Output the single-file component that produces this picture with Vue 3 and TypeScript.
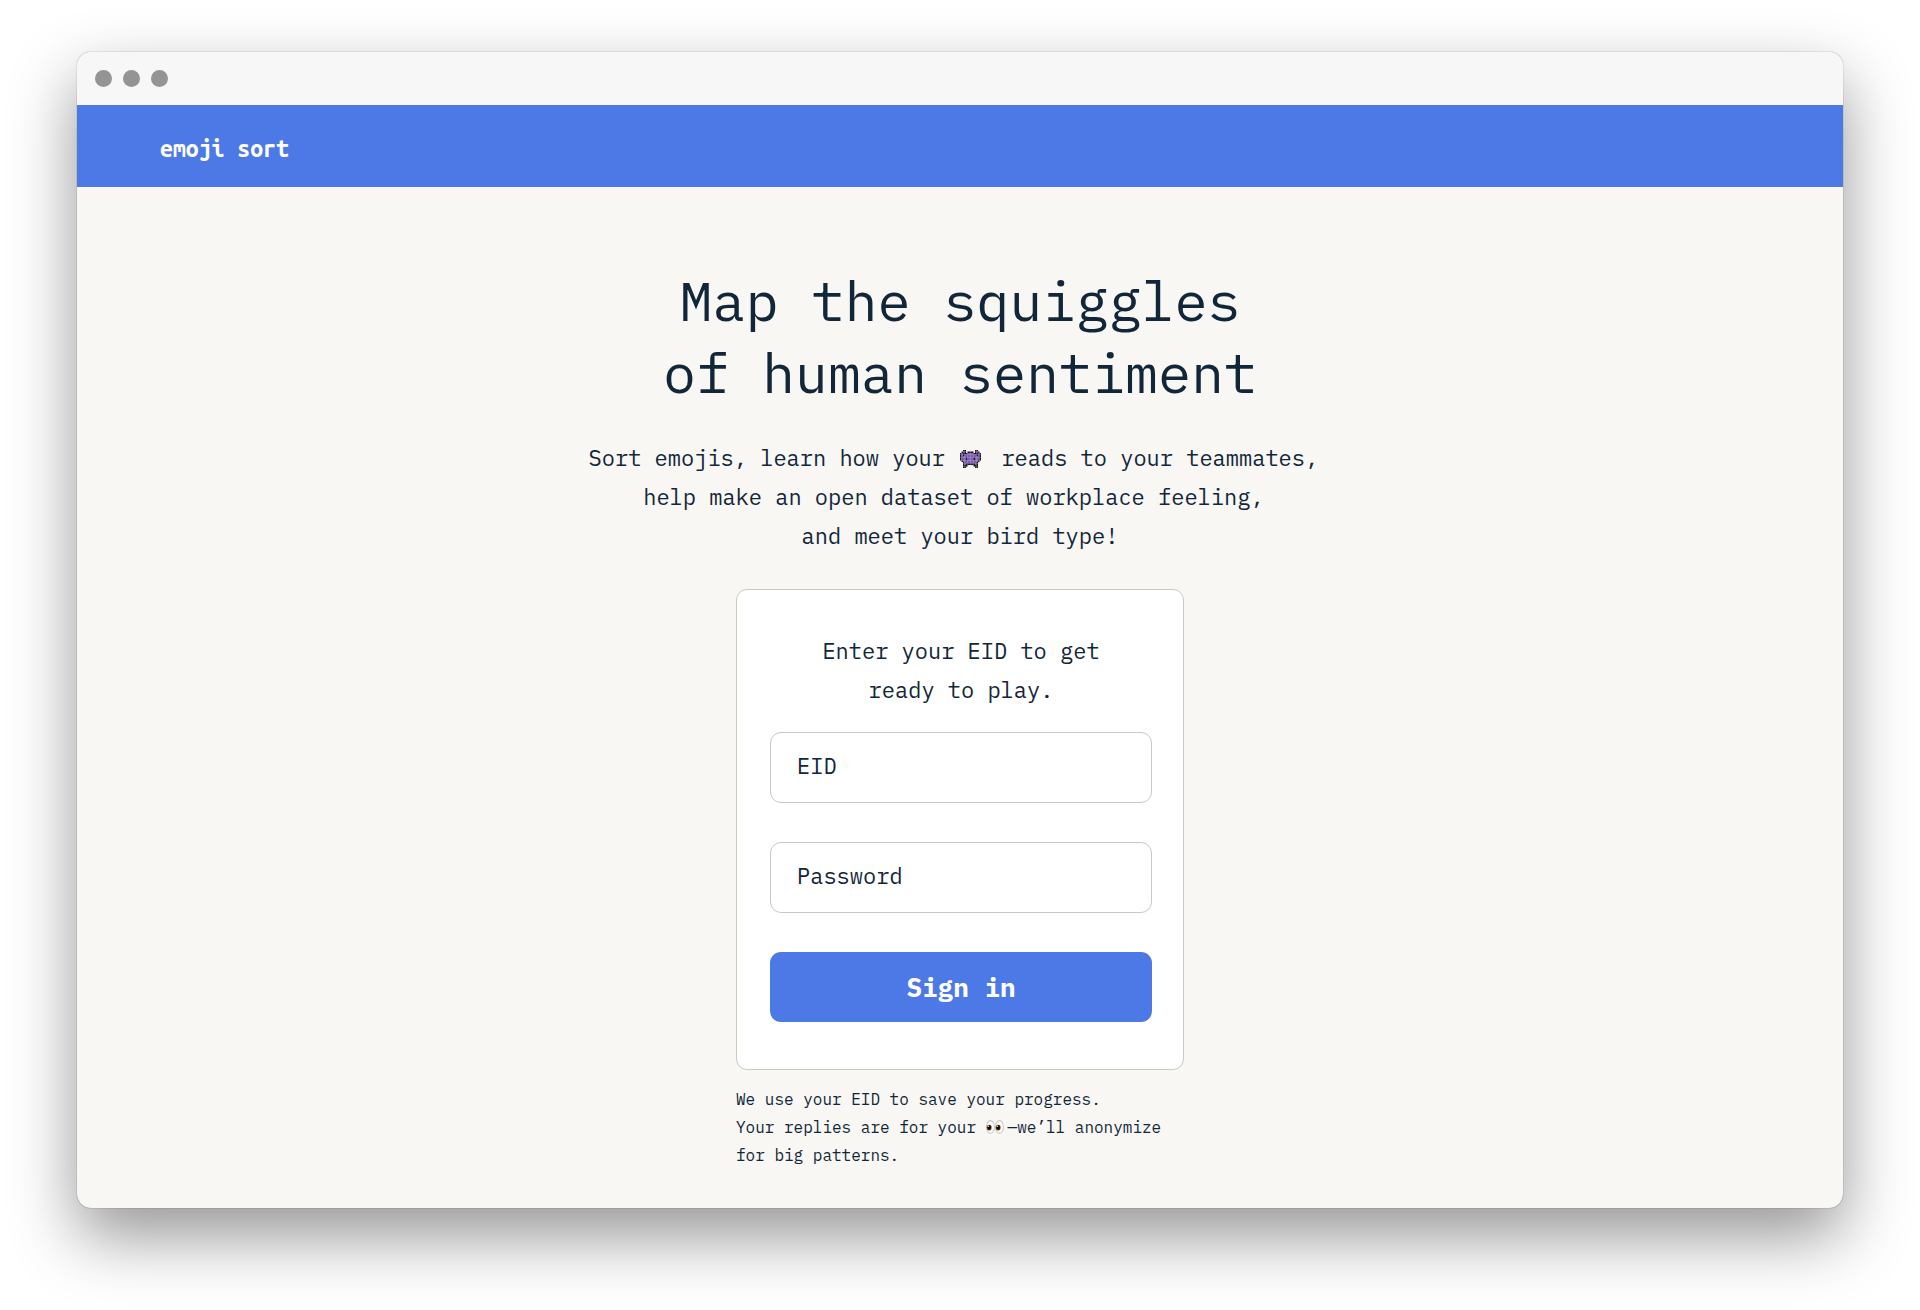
<script setup lang="ts">
import { ref } from 'vue'

const eid = ref('')
const password = ref('')

// Pixel map of the invader: k = outline, p = body, . = empty
const invader: string[] = [
  '..kk......kk..',
  '.kpk.kkkk.kpk.',
  'kpkkkppppkkkpk',
  'kpkppppppppkpk',
  'kppppppppppppk',
  'kpppkppppkpppk',
  'kpppkppppkpppk',
  '.kppppppppppk.',
  '..kppppppppk..',
  '..kpkkkkkkpk..',
  '..kkk....kkk..',
  '..kk......kk..',
]

interface Pixel { x: number; y: number; fill: string }

const pixels: Pixel[] = invader.flatMap((row, y) =>
  [...row].flatMap((c, x) =>
    c === '.' ? [] : [{ x, y, fill: c === 'k' ? '#1f1a26' : '#7d5bb5' }],
  ),
)
</script>

<template>
  <div class="desktop">
    <div class="window">
      <div class="titlebar">
        <span class="dot"></span>
        <span class="dot"></span>
        <span class="dot"></span>
      </div>

      <header class="nav">
        <a class="brand" href="#">emoji sort</a>
      </header>

      <main class="content">
        <h1 class="title">Map the squiggles<br />of human sentiment</h1>

        <p class="lead">
          Sort emojis, learn how your
          <svg class="invader" viewBox="0 0 14 12" preserveAspectRatio="none" role="img" aria-label="alien monster">
            <rect v-for="p in pixels" :key="`${p.x}-${p.y}`" :x="p.x" :y="p.y" width="1.04" height="1.04" :fill="p.fill" />
          </svg>
          reads to your teammates,&nbsp;<br />help make an open dataset of workplace feeling,&nbsp;<br />and
          meet your bird type!
        </p>

        <div class="signin">
          <form class="card" @submit.prevent>
            <p class="prompt">Enter your EID to get<br />ready to play.</p>
            <input v-model="eid" class="field" type="text" placeholder="EID" aria-label="EID" />
            <input v-model="password" class="field" type="password" placeholder="Password" aria-label="Password" />
            <button class="submit" type="submit">Sign in</button>
          </form>

          <p class="note">
            We use your EID to save your progress.<br />Your replies are for your
            <svg class="eyes" viewBox="0 0 34 26" role="img" aria-label="eyes">
              <g fill="#fdfdfd" stroke="#c9c9c9" stroke-width="2">
                <ellipse cx="8.5" cy="13" rx="7.5" ry="12" />
                <ellipse cx="25.5" cy="13" rx="7.5" ry="12" />
              </g>
              <g fill="#7a4312">
                <ellipse cx="6" cy="14" rx="4.6" ry="5.4" />
                <ellipse cx="23" cy="14" rx="4.6" ry="5.4" />
              </g>
              <g fill="#120a05">
                <ellipse cx="6" cy="14" rx="3.4" ry="4.2" />
                <ellipse cx="23" cy="14" rx="3.4" ry="4.2" />
              </g>
              <g fill="#fff">
                <circle cx="4.4" cy="11.6" r="1.4" />
                <circle cx="21.4" cy="11.6" r="1.4" />
              </g>
            </svg>—we’ll anonymize<br />for big patterns.
          </p>
        </div>
      </main>
    </div>
  </div>
</template>

<style>
body {
  background: #fff;
}
</style>

<style scoped>
.desktop {
  box-sizing: border-box;
  min-height: 100vh;
  padding: 52px 77px 102px;
  display: flex;
  overflow: hidden;
  color: #12263a;
  font-family: "IBM Plex Mono", "Liberation Mono", monospace;
}

.window {
  flex: 1;
  min-width: 0;
  display: flex;
  flex-direction: column;
  overflow: hidden;
  border-radius: 14px;
  background: #f8f7f3;
  box-shadow: 0 0 1px rgba(0, 0, 0, 0.7), 0 28px 66px rgba(0, 0, 0, 0.42);
}

.titlebar {
  display: flex;
  align-items: center;
  gap: 11px;
  height: 53px;
  padding: 0 18px;
  background: #f7f7f7;
}

.dot {
  width: 17px;
  height: 17px;
  border-radius: 50%;
  background: #949494;
}

.nav {
  display: flex;
  align-items: center;
  height: 82px;
  padding: 0 83px;
  background: #4c79e6;
}

.brand {
  padding-top: 6px;
  color: #fff;
  font-family: "Ubuntu Mono", "DejaVu Sans Mono", monospace;
  font-size: 23px;
  line-height: 28px;
  font-weight: 700;
  text-decoration: none;
}

.content {
  flex: 1;
  display: flex;
  flex-direction: column;
  align-items: center;
  padding: 78px 24px 38px;
}

.title {
  margin: 0;
  font-size: 55px;
  line-height: 72px;
  font-weight: 400;
  text-align: center;
}

.lead {
  margin: 29px 0 34px;
  font-size: 22px;
  line-height: 39px;
  text-align: center;
}

.invader {
  width: 21px;
  height: 18px;
  margin: 0 7px 0 2px;
  vertical-align: -2px;
}

.signin {
  width: 100%;
  max-width: 448px;
}

.card {
  box-sizing: border-box;
  display: flex;
  flex-direction: column;
  gap: 39px;
  padding: 41px 31px 47px 33px;
  border: 1px solid #c9c9c0;
  border-radius: 11px;
  background: #fff;
}

.prompt {
  margin: 0 0 -16px;
  font-size: 22px;
  line-height: 39px;
  text-align: center;
}

.field,
.submit {
  box-sizing: border-box;
  width: 100%;
  height: 71px;
  margin: 0;
  border-radius: 11px;
  font-family: inherit;
}

.field {
  padding: 0 26px 4px;
  border: 1px solid #c9c9c0;
  background: #fff;
  color: inherit;
  font-size: 22px;
}

.field::placeholder {
  color: #12263a;
  opacity: 1;
}

.submit {
  height: 70px;
  padding: 0;
  border: 0;
  background: #4c79e6;
  color: #fff;
  font-size: 26px;
  font-weight: 700;
}

.note {
  margin: 15px 0 0;
  font-size: 16px;
  line-height: 28px;
  white-space: nowrap;
}

.eyes {
  width: 18px;
  height: 14px;
  margin-right: 4px;
  vertical-align: -1px;
}
</style>
